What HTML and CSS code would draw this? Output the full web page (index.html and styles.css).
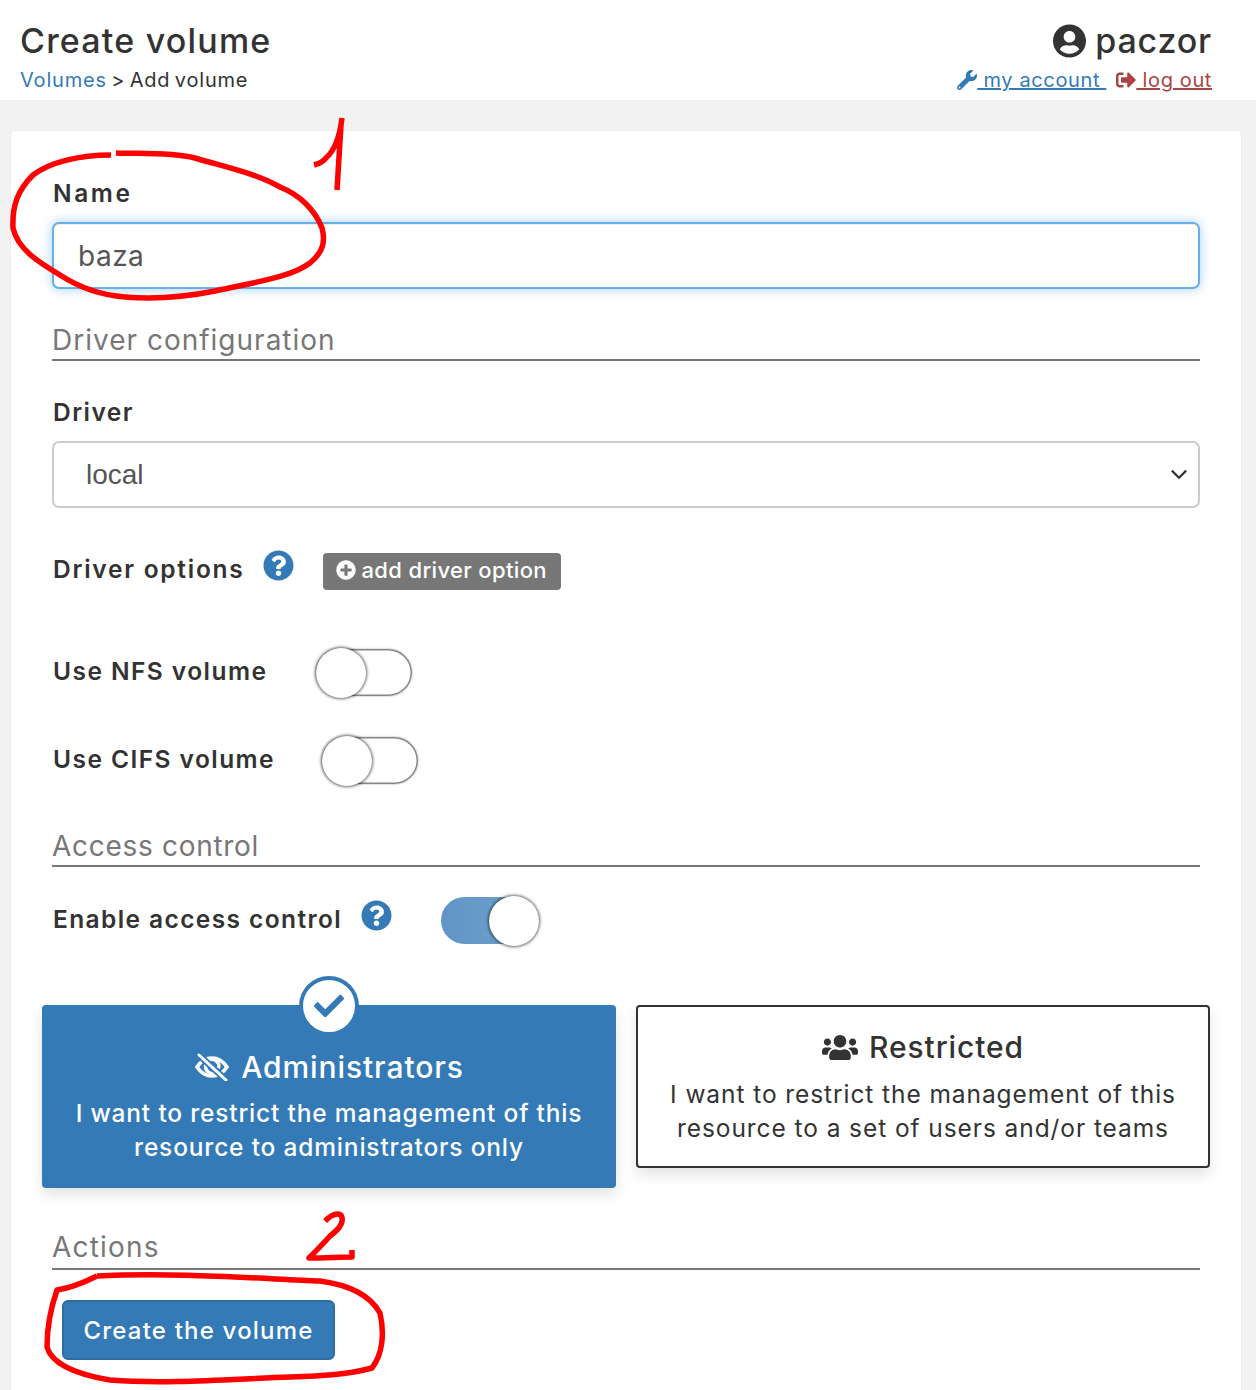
FILE: index.html
```html
<!DOCTYPE html>
<html lang="en">
<head>
<meta charset="utf-8">
<title>Create volume</title>
<link rel="stylesheet" href="styles.css">
</head>
<body>
<header class="topbar">
  <div class="crumbs">
    <h1 class="page-title">Create volume</h1>
    <div class="breadcrumb"><a class="link" href="#">Volumes</a> &gt; Add volume</div>
  </div>
  <div class="account">
    <div class="username">
      <svg class="icon-user" viewBox="0 0 496 512"><path d="M248 8C111 8 0 119 0 256s111 248 248 248 248-111 248-248S385 8 248 8zm0 96c48.6 0 88 39.4 88 88s-39.4 88-88 88-88-39.4-88-88 39.4-88 88-88zm0 344c-58.7 0-111.3-26.6-146.5-68.2 18.8-35.4 55.6-59.8 98.5-59.8 2.4 0 4.8.4 7.1 1.1 13 4.2 26.6 6.9 40.9 6.9 14.3 0 28-2.7 40.9-6.9 2.3-.7 4.7-1.1 7.1-1.1 42.9 0 79.7 24.4 98.5 59.8C359.3 421.4 306.7 448 248 448z"/></svg>
      <span>paczor</span>
    </div>
    <div class="account-links">
      <svg class="icon-link blue" viewBox="0 0 512 512"><path d="M507.73 109.1c-2.24-9.03-13.54-12.09-20.12-5.51l-74.36 74.36-67.88-11.31-11.31-67.88 74.36-74.36c6.62-6.62 3.43-17.9-5.66-20.16-47.38-11.74-99.55.91-136.58 37.93-39.64 39.64-50.55 97.1-34.05 147.2L18.74 402.76c-24.99 24.99-24.99 65.51 0 90.5 24.99 24.99 65.51 24.99 90.5 0l213.21-213.21c50.12 16.71 107.47 5.68 147.37-34.22 37.07-37.07 49.7-89.32 37.91-136.73zM64 472c-13.25 0-24-10.75-24-24 0-13.26 10.75-24 24-24s24 10.74 24 24c0 13.25-10.75 24-24 24z"/></svg>
      <a class="link under" href="#">&nbsp;my account&nbsp;</a>
      <svg class="icon-link red" viewBox="0 0 512 512"><path d="M497 273L329 441c-15 15-41 4.5-41-17v-96H152c-13.3 0-24-10.7-24-24v-96c0-13.3 10.7-24 24-24h136V88c0-21.4 25.9-32 41-17l168 168c9.3 9.4 9.3 24.6 0 34zM192 436v-40c0-6.6-5.4-12-12-12H96c-17.7 0-32-14.3-32-32V160c0-17.7 14.3-32 32-32h84c6.6 0 12-5.4 12-12V76c0-6.6-5.4-12-12-12H96c-53 0-96 43-96 96v192c0 53 43 96 96 96h84c6.6 0 12-5.4 12-12z"/></svg>
      <a class="link-red under" href="#">&nbsp;log out</a>
    </div>
  </div>
</header>

<main class="card">
  <label class="field-label name-label">Name</label>
  <input class="text-input focused" value="baza">

  <div class="section-title first">Driver configuration</div>

  <label class="field-label driver-label">Driver</label>
  <div class="select-box"><span>local</span>
    <svg class="chevron" viewBox="0 0 16 10"><path d="M1.500 1.500L8 8l6.500-6.500" fill="none" stroke="#333" stroke-width="2"/></svg>
  </div>

  <div class="row driver-options">
    <span class="field-label options-label">Driver options</span>
    <svg class="icon-help" viewBox="0 0 512 512"><path d="M504 256c0 136.997-111.043 248-248 248S8 392.997 8 256C8 119.083 119.043 8 256 8s248 111.083 248 248zM262.655 90c-54.497 0-89.255 22.957-116.549 63.758-3.536 5.286-2.353 12.415 2.715 16.258l34.699 26.31c5.205 3.947 12.621 3.008 16.665-2.122 17.864-22.658 30.113-35.797 57.303-35.797 20.429 0 45.698 13.148 45.698 32.958 0 14.976-12.363 22.667-32.534 33.976C247.128 238.528 216 254.941 216 296v4c0 6.627 5.373 12 12 12h56c6.627 0 12-5.373 12-12v-1.333c0-28.462 83.186-29.647 83.186-106.667 0-58.002-60.165-102-116.531-102zM256 338c-25.365 0-46 20.635-46 46 0 25.364 20.635 46 46 46s46-20.636 46-46c0-25.365-20.635-46-46-46z"/></svg>
    <span class="add-option">
      <svg class="icon-plus" viewBox="0 0 512 512"><path d="M256 8C119 8 8 119 8 256s111 248 248 248 248-111 248-248S393 8 256 8zm144 276c0 6.6-5.4 12-12 12h-92v92c0 6.6-5.4 12-12 12h-56c-6.6 0-12-5.4-12-12v-92h-92c-6.6 0-12-5.4-12-12v-56c0-6.6 5.4-12 12-12h92v-92c0-6.6 5.4-12 12-12h56c6.6 0 12 5.4 12 12v92h92c6.6 0 12 5.4 12 12v56z"/></svg>
      add driver option
    </span>
  </div>

  <div class="row toggle-row nfs">
    <span class="field-label nfs-label">Use NFS volume</span>
    <span class="toggle"><span class="knob"></span></span>
  </div>
  <div class="row toggle-row cifs">
    <span class="field-label cifs-label">Use CIFS volume</span>
    <span class="toggle"><span class="knob"></span></span>
  </div>

  <div class="section-title access">Access control</div>

  <div class="row enable-row">
    <span class="field-label enable-label">Enable access control</span>
    <svg class="icon-help second" viewBox="0 0 512 512"><path d="M504 256c0 136.997-111.043 248-248 248S8 392.997 8 256C8 119.083 119.043 8 256 8s248 111.083 248 248zM262.655 90c-54.497 0-89.255 22.957-116.549 63.758-3.536 5.286-2.353 12.415 2.715 16.258l34.699 26.31c5.205 3.947 12.621 3.008 16.665-2.122 17.864-22.658 30.113-35.797 57.303-35.797 20.429 0 45.698 13.148 45.698 32.958 0 14.976-12.363 22.667-32.534 33.976C247.128 238.528 216 254.941 216 296v4c0 6.627 5.373 12 12 12h56c6.627 0 12-5.373 12-12v-1.333c0-28.462 83.186-29.647 83.186-106.667 0-58.002-60.165-102-116.531-102zM256 338c-25.365 0-46 20.635-46 46 0 25.364 20.635 46 46 46s46-20.636 46-46c0-25.365-20.635-46-46-46z"/></svg>
    <span class="toggle on"><span class="knob"></span></span>
  </div>

  <div class="boxes">
    <div class="box selected">
      <span class="check-badge"><svg viewBox="0 0 512 512"><path d="M173.898 439.404l-166.4-166.4c-9.997-9.997-9.997-26.206 0-36.204l36.203-36.204c9.997-9.998 26.207-9.998 36.204 0L192 312.69 432.095 72.596c9.997-9.997 26.207-9.997 36.204 0l36.203 36.204c9.997 9.997 9.997 26.206 0 36.204l-294.4 294.401c-9.998 9.997-26.207 9.997-36.204-.001z"/></svg></span>
      <div class="box-title">
        <svg class="icon-eye" viewBox="0 0 36 28"><path d="M3 14c4-6 9.500-9 15-9s11 3 15 9c-4 6-9.500 9-15 9s-11-3-15-9z" fill="none" stroke="#fff" stroke-width="3.600"/><path d="M12 11a7 7 0 0 0 9 9M14 7.500a7 7 0 0 1 10.500 8" fill="none" stroke="#fff" stroke-width="3.400"/><path d="M5 2l27 25" stroke="#337ab7" stroke-width="6.500"/><path d="M5 2l27 25" stroke="#fff" stroke-width="3" stroke-linecap="round"/></svg>
        <span>Administrators</span>
      </div>
      <p class="box-text">I want to restrict the management of this resource to administrators only</p>
    </div>
    <div class="box plain">
      <div class="box-title">
        <svg class="icon-users" viewBox="0 0 640 512"><path d="M96 224c35.300 0 64-28.700 64-64s-28.700-64-64-64-64 28.700-64 64 28.700 64 64 64zm448 0c35.300 0 64-28.700 64-64s-28.700-64-64-64-64 28.700-64 64 28.700 64 64 64zm32 32h-64c-17.600 0-33.500 7.100-45.100 18.600 40.300 22.100 68.900 62 75.100 109.400h66c17.700 0 32-14.300 32-32v-32c0-35.300-28.700-64-64-64zm-256 0c61.900 0 112-50.100 112-112S381.900 32 320 32 208 82.100 208 144s50.100 112 112 112zm76.800 32h-8.300c-20.800 10-43.900 16-68.500 16s-47.600-6-68.500-16h-8.300C179.600 288 128 339.600 128 403.200V432c0 26.500 21.500 48 48 48h288c26.500 0 48-21.500 48-48v-28.800c0-63.600-51.600-115.200-115.200-115.200zm-223.700-13.400C161.500 263.100 145.600 256 128 256H64c-35.300 0-64 28.700-64 64v32c0 17.700 14.300 32 32 32h65.900c6.300-47.400 34.900-87.300 75.200-109.400z"/></svg>
        <span>Restricted</span>
      </div>
      <p class="box-text">I want to restrict the management of this resource to a set of users and/or teams</p>
    </div>
  </div>

  <div class="section-title actions">Actions</div>
  <button class="primary">Create the volume</button>
</main>

<svg class="scribble" viewBox="0 0 1256 1390">
  <path d="M111 155C80 155 50 162 33 175C18 190 12 205 13 228C18 250 40 263 60 275C80 288 100 295 125 297C150 299 180 298 215 291C250 283 290 278 310 263C322 253 326 243 322 228C315 210 300 195 280 187C255 173 225 167 195 158C170 152 140 154 116 153"/>
  <path d="M342 118C340 135 335 150 326 158C322 163 318 164 314 165M341 125L337 190"/>
  <path d="M325 1221C330 1216 336 1212 341 1215C345 1222 338 1230 330 1236C322 1245 315 1252 309 1258C325 1258 340 1257 352 1257L352 1250"/>
  <path d="M97 1276C85 1282 70 1288 57 1290C50 1310 47 1330 47 1347C52 1365 80 1375 110 1380C160 1384 220 1380 265 1378C300 1376 340 1377 372 1368C382 1355 385 1335 380 1313C370 1295 350 1285 320 1281C250 1278 170 1272 97 1276"/>
</svg>
</body>
</html>
```

FILE: styles.css
```css
* { box-sizing: border-box; }
html, body { margin: 0; padding: 0; }
body {
  width: 1256px;
  height: 1390px;
  overflow: hidden;
  position: relative;
  background: #f2f2f2;
  color: #333;
  font-family: Inter, "Open Sans", sans-serif;
  font-size: 20px;
}
.topbar {
  height: 100px;
  background: #fff;
  display: flex;
  justify-content: space-between;
  padding: 20px 44px 0 20px;
}
.page-title {
  margin: 0;
  font-size: 34px;
  line-height: 42px;
  font-weight: 500;
  letter-spacing: 1.2px;
}
.breadcrumb { font-size: 20px; line-height: 36px; letter-spacing: 0.8px; word-spacing: -2px; }
.link { color: #337ab7; text-decoration: none; }
.link-red { color: #a94442; text-decoration: none; }
.under { text-decoration: underline; }
.account { text-align: right; }
.username {
  display: flex;
  justify-content: flex-end;
  align-items: center;
  gap: 9px;
  font-size: 34px;
  font-weight: 500;
  line-height: 42px;
  letter-spacing: 0.8px;
}
.icon-user { width: 33px; height: 36px; fill: #333; }
.account-links { display: flex; justify-content: flex-end; align-items: center; line-height: 36px; letter-spacing: 0.62px; white-space: pre; }
.icon-link { width: 20px; height: 20px; }
.icon-link.blue { fill: #337ab7; }
.icon-link.red { fill: #a94442; margin-left: 10px; }

.card {
  margin: 31px 15px 0 11px;
  height: 1300px;
  background: #fff;
  border-radius: 4px;
  box-shadow: 0 0 0 1px #ececec;
  padding: 47px 41px 0 41px;
}
.field-label {
  display: block;
  font-weight: 600;
  font-size: 24.500px;
  line-height: 30px;
  letter-spacing: 1.45px;
  color: #333;
}
.name-label { height: 30px; margin-left: 1px; letter-spacing: 2.6px; }
.text-input {
  display: block;
  width: 100%;
  height: 67px;
  margin-top: 14px;
  padding: 0 24px;
  font: 28px Inter, sans-serif;
  letter-spacing: 0.5px;
  color: #555;
  border: 2px solid #66afe9;
  border-radius: 7px;
  outline: 0;
  box-shadow: inset 0 1px 1px rgba(0,0,0,.075), 0 0 11px rgba(102,175,233,.6);
}
.section-title {
  color: #777;
  font-size: 28px;
  line-height: 36px;
  letter-spacing: 1px;
  border-bottom: 2px solid #777;
  height: 39px;
}
.section-title.first { margin-top: 33px; }
.driver-label { margin-top: 36px; margin-left: 1px; }
.select-box {
  margin-top: 14px;
  height: 67px;
  border: 2px solid #ccc;
  border-radius: 7px;
  padding: 0 10px 0 32px;
  display: flex;
  align-items: center;
  justify-content: space-between;
  font-family: "Liberation Sans", sans-serif;
  font-size: 28px;
  color: #555;
}
.chevron { width: 18px; height: 11px; }
.row { display: flex; align-items: center; }
.row .field-label { margin-left: 1px; }
.driver-options { margin-top: 41px; height: 44px; }
.row .options-label { letter-spacing: 1.75px; margin-bottom: 4px; }
.icon-help { width: 31px; height: 31px; fill: #337ab7; margin: -12px 0 0 18px; flex: none; }
.add-option {
  margin-left: 29px;
  height: 37px;
  width: 238px;
  background: #777;
  color: #fff;
  border-radius: 4px;
  display: flex;
  align-items: center;
  gap: 6px;
  padding: 0 0 2px 13px;
  font-size: 22px;
  font-weight: 500;
  letter-spacing: 0.35px;
  white-space: nowrap;
}
.icon-plus { width: 20px; height: 20px; fill: #fff; }
.toggle-row { height: 50px; }
.nfs { margin-top: 54px; }
.cifs { margin-top: 38px; }
.row .nfs-label { width: 263px; flex: none; margin-bottom: 2px; }
.row .cifs-label { width: 269px; flex: none; margin-bottom: 2px; }
.toggle {
  display: block;
  position: relative;
  flex: none;
  width: 96px;
  height: 47px;
  border-radius: 24px;
  background: #fff;
  box-shadow: inset 0 0 0 1.5px #888, 0 0 2px #999;
}
.knob {
  position: absolute;
  left: 0;
  top: -1px;
  width: 50px;
  height: 50px;
  border-radius: 50%;
  background: #fff;
  box-shadow: 0 0 3px 1px rgba(0,0,0,.6);
}
.toggle.on {
  background: linear-gradient(90deg, #5f95c6, #72a2cc);
  box-shadow: none;
  margin: 2px 0 0 49px;
}
.toggle.on .knob { left: 48px; }
.section-title.access { margin-top: 43px; letter-spacing: 0.7px; }
.enable-row { margin-top: 27px; height: 50px; }
.row .enable-label { letter-spacing: 1.4px; }
.icon-help.second { margin: -8px 0 0 19px; }
.boxes {
  margin: 61px -10px 0 -10px;
  display: grid;
  grid-template-columns: 1fr 1fr;
  align-items: start;
  gap: 20px;
}
.box {
  position: relative;
  border-radius: 4px;
  text-align: center;
  box-shadow: 0 7px 14px rgba(0,0,0,.11);
}
.box.selected { height: 183px; background: #337ab7; color: #fff; padding-top: 42px; }
.box.plain { height: 163px; background: #fff; border: 2px solid #333; padding-top: 20px; }
.box-title {
  display: flex;
  justify-content: center;
  align-items: center;
  gap: 11px;
  font-size: 30px;
  font-weight: 500;
  line-height: 40px;
  letter-spacing: 0.9px;
}
.box-text {
  margin: 9px 0 0;
  padding: 0 25px;
  font-size: 24.500px;
  font-weight: 500;
  line-height: 34px;
  letter-spacing: 0.82px;
}
.box.plain .box-text { margin-top: 10px; padding: 0 20px; font-weight: 400; letter-spacing: 0.92px; }
.icon-eye { width: 36px; height: 28px; }
.icon-users { width: 36px; height: 29px; fill: #333; }
.check-badge {
  position: absolute;
  left: 257px;
  top: -29px;
  width: 60px;
  height: 60px;
  border-radius: 50%;
  background: #fff;
  border: 4px solid #337ab7;
  display: flex;
  align-items: center;
  justify-content: center;
}
.check-badge svg { width: 30px; height: 30px; fill: #337ab7; }
.section-title.actions { margin-top: 41px; height: 41px; letter-spacing: 1.2px; }
.primary {
  display: block;
  margin: 30px 0 0 10px;
  width: 273px;
  height: 60px;
  background: #337ab7;
  border: 2px solid #2e6da4;
  border-radius: 6px;
  color: #fff;
  font: 500 24px Inter, sans-serif;
  letter-spacing: 1.2px;
}
.scribble {
  position: absolute;
  left: 0;
  top: 0;
  width: 1256px;
  height: 1390px;
  fill: none;
  stroke: #ff0000;
  stroke-width: 5.500;
  stroke-linejoin: round;
  pointer-events: none;
}
```
